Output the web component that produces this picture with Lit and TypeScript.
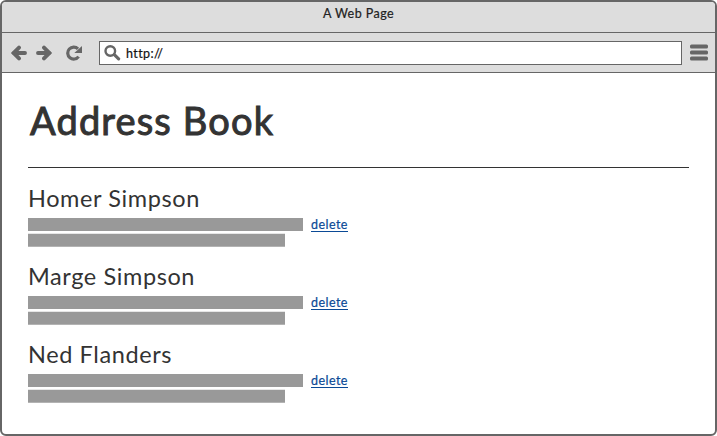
import { LitElement, html, css } from "lit";
import { customElement, property } from "lit/decorators.js";

@customElement("contact-row")
class ContactRow extends LitElement {
  @property() name = "";

  static styles = css`
    :host { display: block; height: 78px; }
    .name {
      height: 33px;
      line-height: 26px;
      font-size: 23.5px;
      letter-spacing: 0.6px;
      color: #333;
      white-space: nowrap;
    }
    .body { display: flex; gap: 8px; }
    .lines { width: 275px; }
    .first { height: 13px; background: #999; margin-bottom: 2px; }
    .second {
      width: 257px;
      height: 12px;
      background: #999;
      border-top: 1px solid #e6e6e6;
      border-bottom: 1px solid #b3b3b3;
      box-sizing: content-box;
    }
    .delete {
      height: 13px;
      line-height: 13px;
      font-size: 12.5px;
      letter-spacing: 0.45px;
      color: #0b4a96;
      -webkit-text-stroke: 0.2px #0b4a96;
      border-bottom: 1px solid #0b4a96;
      width: 37px;
      white-space: nowrap;
      text-decoration: none;
    }
  `;

  render() {
    return html`
      <div class="name">${this.name}</div>
      <div class="body">
        <div class="lines"><div class="first"></div><div class="second"></div></div>
        <a class="delete">delete</a>
      </div>
    `;
  }
}

@customElement("app-root")
class AppRoot extends LitElement {
  private contacts = ["Homer Simpson", "Marge Simpson", "Ned Flanders"];

  static styles = css`
    :host {
      display: block;
      height: 436px;
      background: #fff;
      font-family: Lato, "Open Sans", sans-serif;
    }
    .window {
      box-sizing: border-box;
      height: 436px;
      border: 2px solid #666;
      border-radius: 6px;
      overflow: hidden;
      background: #fff;
    }
    .title {
      height: 30px;
      box-sizing: content-box;
      border-bottom: 1px solid #666;
      background: #ddd;
      text-align: center;
      font-size: 12.5px;
      line-height: 24px;
      letter-spacing: 0.45px;
      color: #222;
      -webkit-text-stroke: 0.2px #222;
    }
    .toolbar {
      height: 39px;
      border-bottom: 1px solid #666;
      background: #ddd;
      display: flex;
      align-items: center;
      padding: 0 7px 0 8px;
    }
    svg { display: block; flex: none; }
    .forward { margin-left: 7px; }
    .reload { margin-left: 12px; }
    .url {
      box-sizing: border-box;
      flex: 1;
      height: 24px;
      margin: 1px 8px 0 16px;
      border: 1px solid #666;
      background: #fff;
      display: flex;
      align-items: center;
      padding-left: 4px;
      gap: 5px;
      font-size: 12.5px;
      letter-spacing: 0.4px;
      color: #111;
      -webkit-text-stroke: 0.2px #111;
    }
    .page { padding: 0 26px; }
    h1 {
      margin: 0;
      height: 94px;
      line-height: 95px;
      border-bottom: 1px solid #333;
      padding-left: 2px;
      font-size: 38px;
      font-weight: 400;
      letter-spacing: 1.15px;
      color: #333;
      -webkit-text-stroke: 1px #333;
      stroke-linejoin: round;
    }
    .list { padding-top: 17px; }
  `;

  render() {
    return html`
      <div class="window">
        <div class="title">A Web Page</div>
        <div class="toolbar">
          <svg width="18" height="16" viewBox="0 0 18 16" fill="none" stroke="#666" stroke-width="3.9">
            <path d="M4 8H15" stroke-linecap="round" />
            <path d="M9 2.6L3.6 8L9 13.4" stroke-linecap="round" />
          </svg>
          <svg class="forward" width="18" height="16" viewBox="0 0 18 16" fill="none" stroke="#666" stroke-width="3.9">
            <path d="M3 8H14" stroke-linecap="round" />
            <path d="M9 2.6L14.4 8L9 13.4" stroke-linecap="round" />
          </svg>
          <svg class="reload" width="18" height="16" viewBox="0 0 18 16">
            <path d="M13.6 11.6A6 6 0 1 1 13 3.8" fill="none" stroke="#666" stroke-width="3.2" />
            <path d="M17 1V8H9.3Z" fill="#666" />
          </svg>
          <div class="url">
            <svg width="17" height="16" viewBox="0 0 17 16" fill="none" stroke="#666">
              <circle cx="6.3" cy="6" r="4.8" stroke-width="2.4" />
              <path d="M10.3 9.7L14.6 13.8" stroke-width="3.2" stroke-linecap="round" />
            </svg>
            <span>http://</span>
          </div>
          <svg width="18" height="17" viewBox="0 0 18 17" fill="#666">
            <rect y="0.5" width="18" height="4" rx="1.5" />
            <rect y="6.5" width="18" height="4" rx="1.5" />
            <rect y="12.5" width="18" height="4" rx="1.5" />
          </svg>
        </div>
        <div class="page">
          <h1>Address Book</h1>
          <div class="list">
            ${this.contacts.map((c) => html`<contact-row .name=${c}></contact-row>`)}
          </div>
        </div>
      </div>
    `;
  }
}
